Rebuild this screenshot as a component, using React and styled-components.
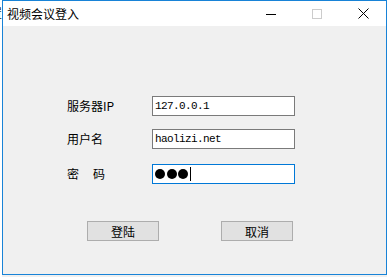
import React from "react";
import styled, { createGlobalStyle } from "styled-components";

const Global = createGlobalStyle`
  html, body { margin: 0; padding: 0; background: #f0f0f0; }
  body { font-family: "Noto Sans CJK SC", "Noto Sans", sans-serif; width: 389px; height: 277px; overflow: hidden; }
`;

const Page = styled.div`
  display: flex;
  align-items: flex-start;
  width: 389px;
  height: 277px;
`;

const BehindStrip = styled.div`
  width: 2px;
  height: 277px;
  overflow: hidden;
  display: flex;
  justify-content: flex-end;
  background: #ffffff;
  flex-shrink: 0;
`;

const BehindChar = styled.span`
  flex-shrink: 0;
  font-size: 12px;
  line-height: 12px;
  margin-top: 7px;
  color: #222;
`;

const RightStrip = styled.div`
  width: 2px;
  height: 277px;
  background: #ffffff;
  border-top: 0;
  flex-shrink: 0;
  display: flex;
  flex-direction: column;
`;

const Window = styled.div`
  width: 385px;
  height: 275px;
  box-sizing: border-box;
  border: 1px solid #1883d7;
  background: #f0f0f0;
  display: flex;
  flex-direction: column;
  flex-shrink: 0;
`;

const TitleBar = styled.div`
  height: 25px;
  background: #ffffff;
  display: flex;
  align-items: center;
  flex-shrink: 0;
`;

const Title = styled.div`
  flex: 1;
  padding-left: 4px;
  font-size: 12px;
  line-height: 12px;
  color: #000;
  margin-top: 1px;
`;

const Ctrl = styled.div`
  width: 46px;
  height: 25px;
  display: flex;
  align-items: center;
  justify-content: center;
`;

const Body = styled.div`
  flex: 1;
  display: flex;
  flex-direction: column;
  padding: 70px 0 0 64px;
`;

const Row = styled.div`
  display: flex;
  align-items: center;
  height: 20px;
  margin-top: ${(p) => p.$mt || 0}px;
`;

const Label = styled.div`
  width: 85px;
  font-size: 12px;
  line-height: 12px;
  color: #000;
  display: flex;
  gap: ${(p) => p.$spread || 0}px;
`;

const Field = styled.div`
  width: 143px;
  height: 20px;
  box-sizing: border-box;
  border: 1px solid ${(p) => (p.$focus ? "#0078d7" : "#7a7a7a")};
  background: #fff;
  display: flex;
  align-items: center;
  padding-left: 2px;
  font-family: "Liberation Mono", "DejaVu Sans Mono", monospace;
  font-size: 11px;
  letter-spacing: -0.6px;
  color: #000;
`;

const Dot = styled.span`
  width: 10px;
  height: 10px;
  border-radius: 50%;
  background: #000;
  margin-right: 1.5px;
  flex-shrink: 0;
`;

const Caret = styled.span`
  width: 1px;
  height: 14px;
  background: #000;
  margin-left: 0.5px;
`;

const Buttons = styled.div`
  display: flex;
  margin-top: 37px;
  margin-left: 20px;
  gap: 62px;
`;

const Btn = styled.div`
  width: 72px;
  height: 20px;
  box-sizing: border-box;
  border: 1px solid #adadad;
  background: #e1e1e1;
  display: flex;
  align-items: center;
  justify-content: center;
  font-size: 12px;
  color: #000;
`;

export default function App() {
  return (
    <>
      <Global />
      <Page>
        <BehindStrip>
          <BehindChar>置</BehindChar>
        </BehindStrip>
        <Window>
          <TitleBar>
            <Title>视频会议登入</Title>
            <Ctrl>
              <svg width="10" height="10" viewBox="0 0 10 10">
                <line x1="0" y1="5.5" x2="10" y2="5.5" stroke="#000" strokeWidth="1" />
              </svg>
            </Ctrl>
            <Ctrl>
              <svg width="10" height="10" viewBox="0 0 10 10">
                <rect x="0.5" y="0.5" width="9" height="9" fill="none" stroke="#cccccc" strokeWidth="1" />
              </svg>
            </Ctrl>
            <Ctrl>
              <svg width="11" height="11" viewBox="0 0 11 11">
                <path d="M0.5 0.5 L10.5 10.5 M10.5 0.5 L0.5 10.5" stroke="#000" strokeWidth="1" />
              </svg>
            </Ctrl>
          </TitleBar>
          <Body>
            <Row>
              <Label>服务器IP</Label>
              <Field>127.0.0.1</Field>
            </Row>
            <Row $mt={13}>
              <Label>用户名</Label>
              <Field>haolizi.net</Field>
            </Row>
            <Row $mt={15}>
              <Label $spread={14}>
                <span>密</span>
                <span>码</span>
              </Label>
              <Field $focus>
                <Dot />
                <Dot />
                <Dot />
                <Caret />
              </Field>
            </Row>
            <Buttons>
              <Btn>登陆</Btn>
              <Btn>取消</Btn>
            </Buttons>
          </Body>
        </Window>
        <RightStrip />
      </Page>
    </>
  );
}
